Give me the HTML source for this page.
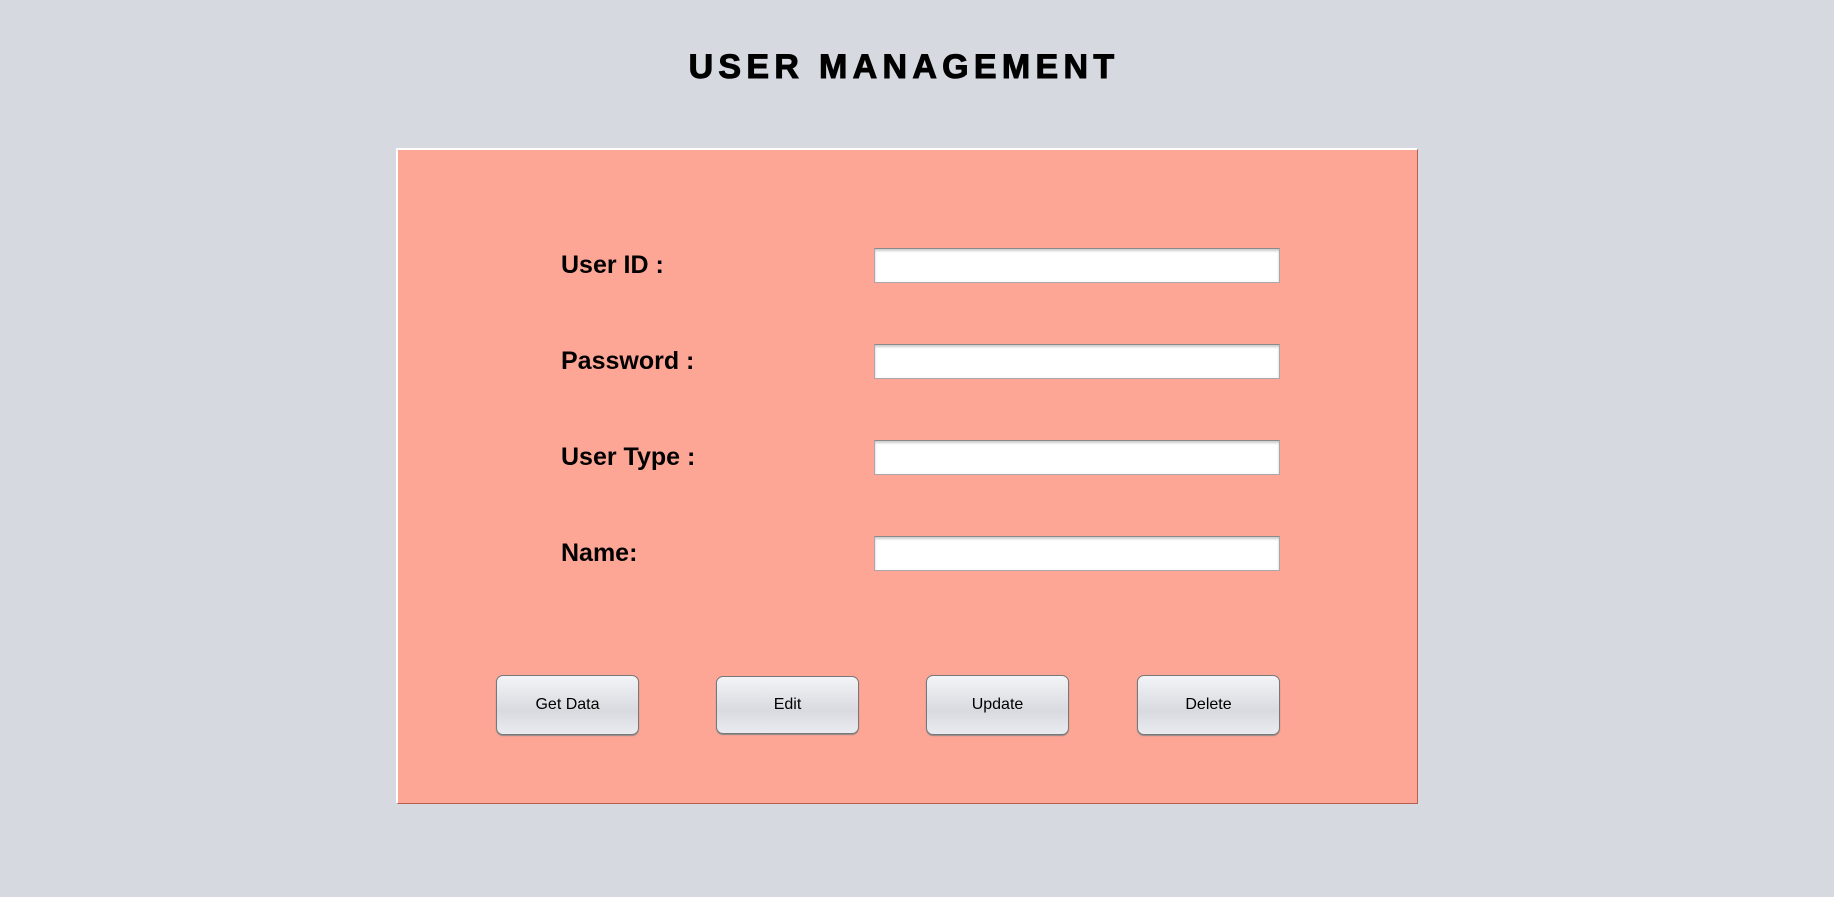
<!DOCTYPE html>
<html><head><style>
body{margin:0;width:1834px;height:897px;background:#d6d9e0;position:relative;font-family:"Liberation Sans",sans-serif;overflow:hidden}
h1{position:absolute;left:0;width:1808px;text-align:center;top:48px;margin:0;font-size:34px;font-weight:900;letter-spacing:5.3px;color:#000;-webkit-text-stroke:1px #000}
.panel{position:absolute;left:396px;top:148px;width:1019px;height:653px;background:#fea696;border-top:2px solid #fff;border-left:2px solid #fff;border-right:1px solid #b55e50;border-bottom:1px solid #b55e50}
.l{position:absolute;left:561px;font-size:25px;font-weight:bold;color:#000}
.i{position:absolute;left:874px;width:404px;height:33px;background:#fff;border:1px solid #a8a8a8;border-top-color:#8a8a8a;box-shadow:inset 0 2px 2px #ccc}
.b{position:absolute;top:675px;height:58px;width:141px;border:1px solid #777;border-radius:7px;background:linear-gradient(#f3f4f7,#d8dae0 60%,#e9ebf0);font-size:16px;text-align:center;line-height:58px;box-shadow:0 1px 1px #888}
</style></head><body>
<h1>USER MANAGEMENT</h1>
<div class="panel"></div>
<div class="l" style="top:251px">User ID :</div>
<div class="l" style="top:347px">Password :</div>
<div class="l" style="top:443px">User Type :</div>
<div class="l" style="top:539px">Name:</div>
<div class="i" style="top:248px"></div>
<div class="i" style="top:344px"></div>
<div class="i" style="top:440px"></div>
<div class="i" style="top:536px"></div>
<div class="b" style="left:496px">Get Data</div>
<div class="b" style="left:716px;top:676px;height:56px;line-height:56px">Edit</div>
<div class="b" style="left:926px">Update</div>
<div class="b" style="left:1137px">Delete</div>
</body></html>
